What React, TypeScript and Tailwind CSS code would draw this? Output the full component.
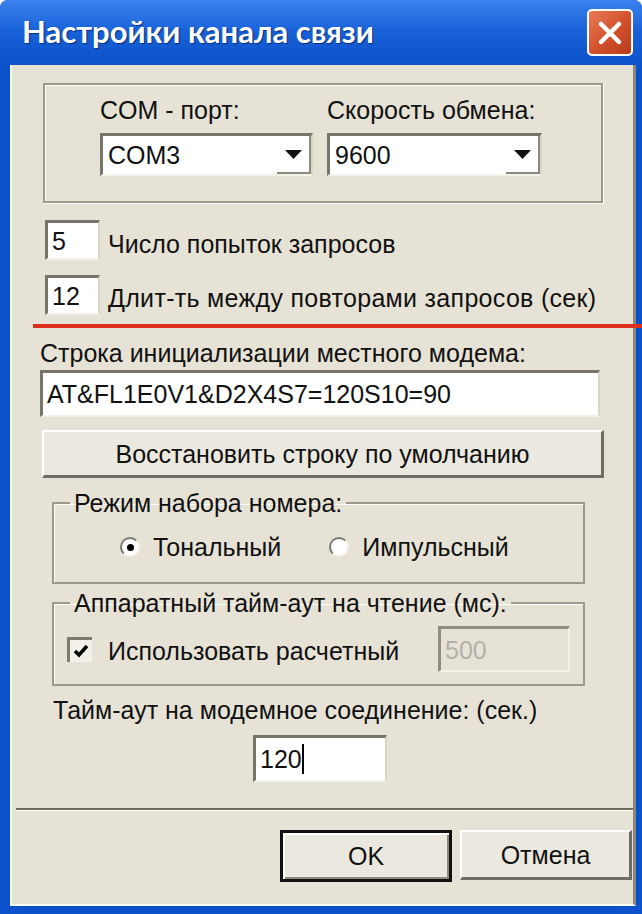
import React from 'react';

const sunken =
  'bg-white border-t-[3px] border-l-[3px] border-r-2 border-b-2 border-t-[#77756b] border-l-[#77756b] border-r-[#d9d6c9] border-b-[#f3f1e9]';

const raised =
  'bg-[#ebe9df] border-t-2 border-l-2 border-r-[3px] border-b-[3px] border-t-white border-l-white border-r-[#6f6d63] border-b-[#6f6d63]';

const Combo: React.FC<{ value: string; width: string }> = ({ value, width }) => (
  <div className={`${sunken} ${width} h-[43px] flex items-center`}>
    <span className="pl-[5px] flex-1">{value}</span>
    <div className="w-[34px] h-full flex items-center justify-center border-r-2 border-b-2 border-r-[#8d8a7d] border-b-[#8d8a7d]">
      <svg width="17" height="9" viewBox="0 0 17 9">
        <polygon points="0,0 17,0 8.5,9" fill="#111" />
      </svg>
    </div>
  </div>
);

const App: React.FC = () => {
  return (
    <div className="relative w-[642px] h-[914px] bg-[#0b51c9] rounded-t-[8px] flex flex-col overflow-hidden font-['Liberation_Sans',Arial,sans-serif] text-[25px] leading-[28px] text-[#111]">
      {/* Title bar */}
      <div className="h-[65px] shrink-0 flex items-center justify-between pl-[22px] pr-[9px] bg-gradient-to-b from-[#3b82ee] via-[#1760d8] to-[#0d53c8]">
        <h1 className="text-white font-bold text-[31px] leading-none pb-[2px] font-['Lato',Arial,sans-serif] [text-shadow:1px_1px_1px_#0a2d7a]">
          Настройки канала связи
        </h1>
        <div className="w-[46px] h-[47px] rounded-[5px] border-2 border-white bg-gradient-to-br from-[#e87a56] via-[#d4532f] to-[#b83a18] flex items-center justify-center">
          <svg width="26" height="26" viewBox="0 0 26 26">
            <path d="M4 4 L22 22 M22 4 L4 22" stroke="#fff" strokeWidth="4.5" strokeLinecap="round" />
          </svg>
        </div>
      </div>

      {/* Body */}
      <div className="flex-1 flex flex-col ml-[10px] mr-[6px] mb-[8px] bg-[#e6e3d6] border-l-2 border-l-[#f5f4ee] border-b-2 border-b-white border-r-[3px] border-r-[#8a887c]">
        {/* Port group */}
        <div className="mt-[18px] ml-[31px] w-[560px] h-[120px] border-2 border-[#9c998b] shadow-[inset_1px_1px_0_#fff,1px_1px_0_#fff] pl-[55px] pt-[11px]">
          <div className="flex gap-[14px]">
            <div className="flex flex-col gap-[9px]">
              <span>COM - порт:</span>
              <Combo value="COM3" width="w-[213px]" />
            </div>
            <div className="flex flex-col gap-[9px]">
              <span>Скорость обмена:</span>
              <Combo value="9600" width="w-[215px]" />
            </div>
          </div>
        </div>

        {/* Retry count */}
        <div className="mt-[17px] ml-[33px] flex items-center gap-[8px]">
          <div className={`${sunken} w-[55px] h-[40px] pl-[4px] flex items-center`}>5</div>
          <span className="pt-[8px]">Число попыток запросов</span>
        </div>
        <div className="mt-[15px] ml-[33px] flex items-center gap-[8px]">
          <div className={`${sunken} w-[55px] h-[40px] pl-[4px] flex items-center`}>12</div>
          <span className="pt-[6px] tracking-[0.3px]">Длит-ть между повторами запросов (сек)</span>
        </div>

        {/* Init string */}
        <div className="mt-[24px] ml-[28px]">Строка инициализации местного модема:</div>
        <div className={`${sunken} mt-[3px] ml-[28px] w-[560px] h-[47px] pl-[4px] flex items-center`}>
          AT&amp;FL1E0V1&amp;D2X4S7=120S10=90
        </div>
        <button className={`${raised} mt-[13px] ml-[30px] w-[562px] h-[48px] text-center`}>
          Восстановить строку по умолчанию
        </button>

        {/* Dial mode */}
        <fieldset className="mt-[11px] ml-[40px] w-[533px] border-2 border-[#9c998b] shadow-[inset_1px_1px_0_#fff] px-0 pt-[16px] pb-[21px]">
          <legend className="ml-[16px] px-[4px]">Режим набора номера:</legend>
          <div className="flex items-center pl-[66px]">
            <span className="w-[20px] h-[20px] rounded-full bg-white border-2 border-t-[#7b796e] border-l-[#7b796e] border-r-[#f3f1e9] border-b-[#f3f1e9] flex items-center justify-center">
              <span className="w-[7px] h-[7px] rounded-full bg-black" />
            </span>
            <span className="ml-[13px]">Тональный</span>
            <span className="ml-[48px] w-[20px] h-[20px] rounded-full bg-white border-2 border-t-[#7b796e] border-l-[#7b796e] border-r-[#f3f1e9] border-b-[#f3f1e9]" />
            <span className="ml-[13px]">Импульсный</span>
          </div>
        </fieldset>

        {/* Hardware timeout */}
        <fieldset className="mt-[5px] ml-[40px] w-[533px] border-2 border-[#9c998b] shadow-[inset_1px_1px_0_#fff] px-0 pt-[9px] pb-[12px]">
          <legend className="ml-[16px] px-[4px]">Аппаратный тайм-аут на чтение (мс):</legend>
          <div className="flex items-center pl-[13px] pr-[13px] h-[46px]">
            <span className="w-[25px] h-[25px] bg-[#f2f0e8] border-t-[3px] border-l-[3px] border-t-[#7d7b70] border-l-[#7d7b70] flex items-center justify-center">
              <svg width="16" height="14" viewBox="0 0 16 14">
                <path d="M2 7 L6 11 L14 2" stroke="#000" strokeWidth="3.5" fill="none" />
              </svg>
            </span>
            <span className="ml-[16px] pt-[4px]">Использовать расчетный</span>
            <div className="ml-auto w-[132px] h-[46px] bg-[#e6e3d6] border-t-[3px] border-l-[3px] border-r-2 border-b-2 border-t-[#8f8d82] border-l-[#8f8d82] border-r-[#f3f1e9] border-b-[#f3f1e9] pl-[4px] flex items-center text-[#b3b1a8]">
              500
            </div>
          </div>
        </fieldset>

        {/* Modem connect timeout */}
        <div className="mt-[10px] ml-[41px]">Тайм-аут на модемное соединение: (сек.)</div>
        <div className={`${sunken} mt-[11px] ml-[241px] w-[134px] h-[47px] pl-[4px] flex items-center`}>
          120<span className="w-[2px] h-[30px] bg-black" />
        </div>

        <div className="mt-[26px] ml-[4px] h-[3px] bg-[#6f6d62] border-b border-b-white" />

        {/* Buttons */}
        <div className="mt-[19px] flex items-start">
          <button className="ml-[268px] w-[172px] h-[52px] border-[3px] border-[#111] bg-[#ebe9df] shadow-[inset_2px_2px_0_#fff,inset_-2px_-2px_0_#8d8a7d] text-center">
            OK
          </button>
          <button className={`${raised} ml-[8px] w-[172px] h-[50px] text-center`}>Отмена</button>
        </div>
      </div>

      {/* red annotation line */}
      <div className="absolute top-[324px] left-[33px] right-0 h-[4px] bg-[#dc2f1c]" />
    </div>
  );
};

export default App;
